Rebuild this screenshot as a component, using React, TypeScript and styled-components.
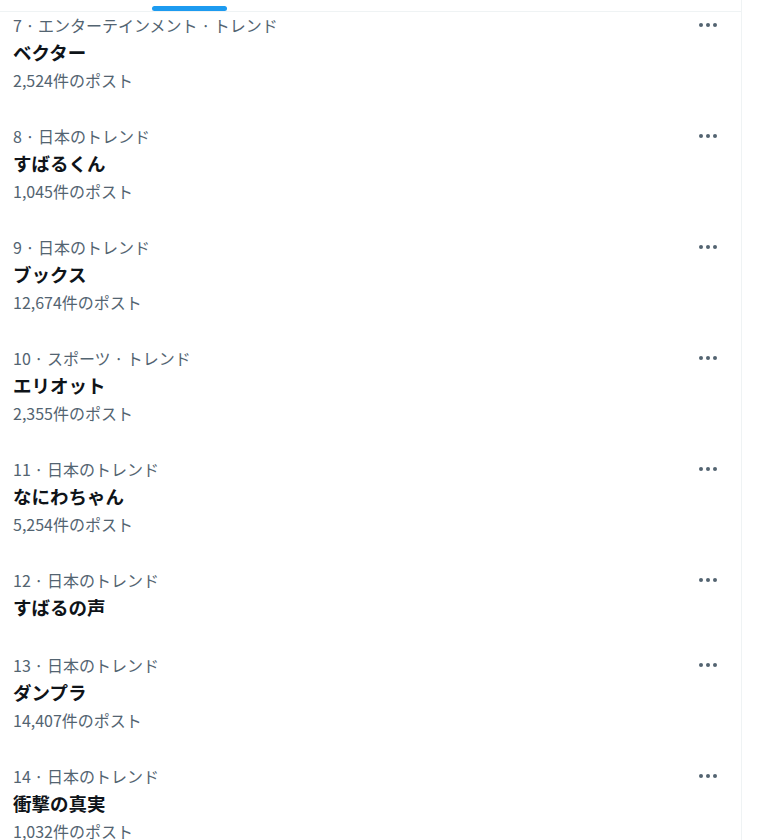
import * as React from "react";
import styled, { createGlobalStyle } from "styled-components";

const GlobalStyle = createGlobalStyle`
  html, body {
    margin: 0;
    padding: 0;
    background: #ffffff;
    font-family: "Noto Sans CJK JP", "Noto Sans", sans-serif;
  }
`;

const Page = styled.div`
  width: 764px;
  height: 840px;
  overflow: hidden;
  background: #ffffff;
`;

const Column = styled.div`
  width: 742px;
  height: 840px;
  border-right: 1px solid #eff3f4;
  box-sizing: border-box;
  overflow: hidden;
`;

const TabBar = styled.div`
  position: relative;
  z-index: 1;
  height: 11px;
  background: #ffffff;
  border-bottom: 1px solid #eff3f4;
`;

const TabIndicator = styled.div`
  position: absolute;
  left: 152px;
  bottom: 0;
  width: 75px;
  height: 5px;
  border-radius: 3px;
  background: #1d9bf0;
`;

const List = styled.div`
  margin-top: -15px;
`;

const Item = styled.div`
  display: flex;
  justify-content: space-between;
  align-items: flex-start;
  padding: 18px 12px 18px 13px;
`;

const Texts = styled.div`
  display: flex;
  flex-direction: column;
`;

const Category = styled.div`
  font-size: 16px;
  line-height: 20px;
  color: #536471;
`;

const Title = styled.div`
  margin-top: 5px;
  font-size: 18.5px;
  line-height: 24px;
  font-weight: 700;
  color: #0f1419;
`;

const Count = styled.div`
  margin-top: 6px;
  font-size: 16px;
  line-height: 20px;
  color: #536471;
`;

const MoreButton = styled.div`
  display: flex;
  gap: 3px;
  margin-top: 8px;
  margin-right: 12px;
`;

const Dot = styled.span`
  width: 4px;
  height: 4px;
  border-radius: 50%;
  background: #536471;
`;

interface Trend {
  category: string;
  title: string;
  count?: string;
}

const trends: Trend[] = [
  { category: "7 · エンターテインメント · トレンド", title: "ベクター", count: "2,524件のポスト" },
  { category: "8 · 日本のトレンド", title: "すばるくん", count: "1,045件のポスト" },
  { category: "9 · 日本のトレンド", title: "ブックス", count: "12,674件のポスト" },
  { category: "10 · スポーツ · トレンド", title: "エリオット", count: "2,355件のポスト" },
  { category: "11 · 日本のトレンド", title: "なにわちゃん", count: "5,254件のポスト" },
  { category: "12 · 日本のトレンド", title: "すばるの声" },
  { category: "13 · 日本のトレンド", title: "ダンプラ", count: "14,407件のポスト" },
  { category: "14 · 日本のトレンド", title: "衝撃の真実", count: "1,032件のポスト" },
];

export default function App() {
  return (
    <Page>
      <GlobalStyle />
      <Column>
        <TabBar>
          <TabIndicator />
        </TabBar>
        <List>
          {trends.map((t) => (
            <Item key={t.category}>
              <Texts>
                <Category>{t.category}</Category>
                <Title>{t.title}</Title>
                {t.count && <Count>{t.count}</Count>}
              </Texts>
              <MoreButton>
                <Dot />
                <Dot />
                <Dot />
              </MoreButton>
            </Item>
          ))}
        </List>
      </Column>
    </Page>
  );
}
